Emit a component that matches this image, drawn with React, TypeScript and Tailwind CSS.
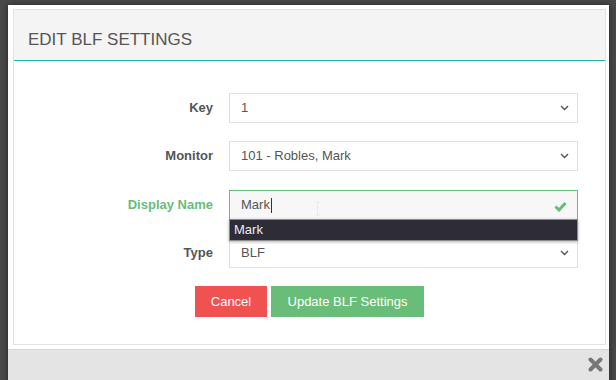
import React from 'react';

const Chevron = () => (
  <svg width="9" height="6" viewBox="0 0 9 6" className="absolute right-[8px] top-1/2 -translate-y-1/2">
    <polyline points="1,1 4.5,4.5 8,1" fill="none" stroke="#555" strokeWidth="1.4" />
  </svg>
);

const Row: React.FC<{ label: string; green?: boolean; className?: string; children: React.ReactNode }> = ({
  label,
  green,
  className,
  children,
}) => (
  <div className={`flex items-center ${className ?? ''}`}>
    <div className={`w-[199px] text-right text-[13px] font-bold ${green ? 'text-[#68bd78]' : 'text-[#555]'}`}>{label}</div>
    <div className="ml-[16px] w-[349px] relative">{children}</div>
  </div>
);

const SelectBox: React.FC<{ value: string }> = ({ value }) => (
  <div className="h-[30px] border border-[#e0e0e0] bg-white flex items-center pl-[11px] text-[13px] text-[#555] relative">
    {value}
    <Chevron />
  </div>
);

export default function App() {
  return (
    <div className="w-[616px] h-[380px] overflow-hidden bg-[#4a4a4a] pl-[8px] pt-[5px] font-['Liberation_Sans',Arial,sans-serif]">
      <div className="w-[601px] bg-white shadow-[0_0_7px_rgba(0,0,0,0.55)] flex flex-col">
        <div className="pl-[5px] pr-[3px] pt-[4px] pb-[4px]">
          <div className="border border-[#e2e2e2] h-[336px]">
            {/* Header */}
            <div className="h-[51px] bg-[#f4f4f4] border-b border-[#1fb5ad] pl-[14px] pt-[20px] text-[17px] leading-[20px] text-[#555]">
              EDIT BLF SETTINGS
            </div>

            {/* Form */}
            <div className="pt-[32px] flex flex-col gap-[18px]">
              <Row label="Key">
                <SelectBox value="1" />
              </Row>
              <Row label="Monitor">
                <SelectBox value="101 - Robles, Mark" />
              </Row>
              <Row label="Display Name" green className="mt-px">
                <div className="h-[30px] border border-[#68bd78] bg-[#f7f7f7] flex items-center pl-[11px] text-[13px] text-[#555] relative">
                  Mark
                  <span className="w-px h-[15px] bg-[#333] ml-px" />
                  <svg width="13" height="11" viewBox="0 0 13 11" className="absolute right-[10px] top-[10px]">
                    <polyline points="1.5,5.5 5,9 11.5,2" fill="none" stroke="#68bd78" strokeWidth="3" />
                  </svg>
                  {/* mouse I-beam */}
                  <svg width="7" height="15" viewBox="0 0 7 15" className="absolute left-[84px] top-[10px]">
                    <path d="M1 1h5M3.5 1v13M1 14h5" stroke="#ebebeb" strokeWidth="1" fill="none" />
                  </svg>
                </div>
                <div className="absolute left-0 top-[29px] w-full h-[22px] bg-[#2e2c36] border border-[#8a8a8a] shadow-[0_1px_3px_rgba(0,0,0,0.3)] z-10 flex items-center pl-[4px] text-[13px] text-[#ececf2]">
                  Mark
                </div>
              </Row>
              <Row label="Type">
                <SelectBox value="BLF" />
              </Row>

              <div className="flex gap-[4px] ml-[181px]">
                <button className="w-[72px] h-[31px] bg-[#f05252] text-white text-[13px]">Cancel</button>
                <button className="w-[153px] h-[31px] bg-[#68bd78] text-white text-[13px]">Update BLF Settings</button>
              </div>
            </div>
          </div>
        </div>

        {/* Footer */}
        <div className="h-[40px] bg-[#e4e4e4] border-t border-[#d6d6d6] flex justify-end pr-[6px] pt-[7px]">
          <svg width="15" height="15" viewBox="0 0 15 15">
            <path d="M2.5 2.5L12.5 12.5M12.5 2.5L2.5 12.5" stroke="#777" strokeWidth="4" strokeLinecap="round" />
          </svg>
        </div>
      </div>
    </div>
  );
}
